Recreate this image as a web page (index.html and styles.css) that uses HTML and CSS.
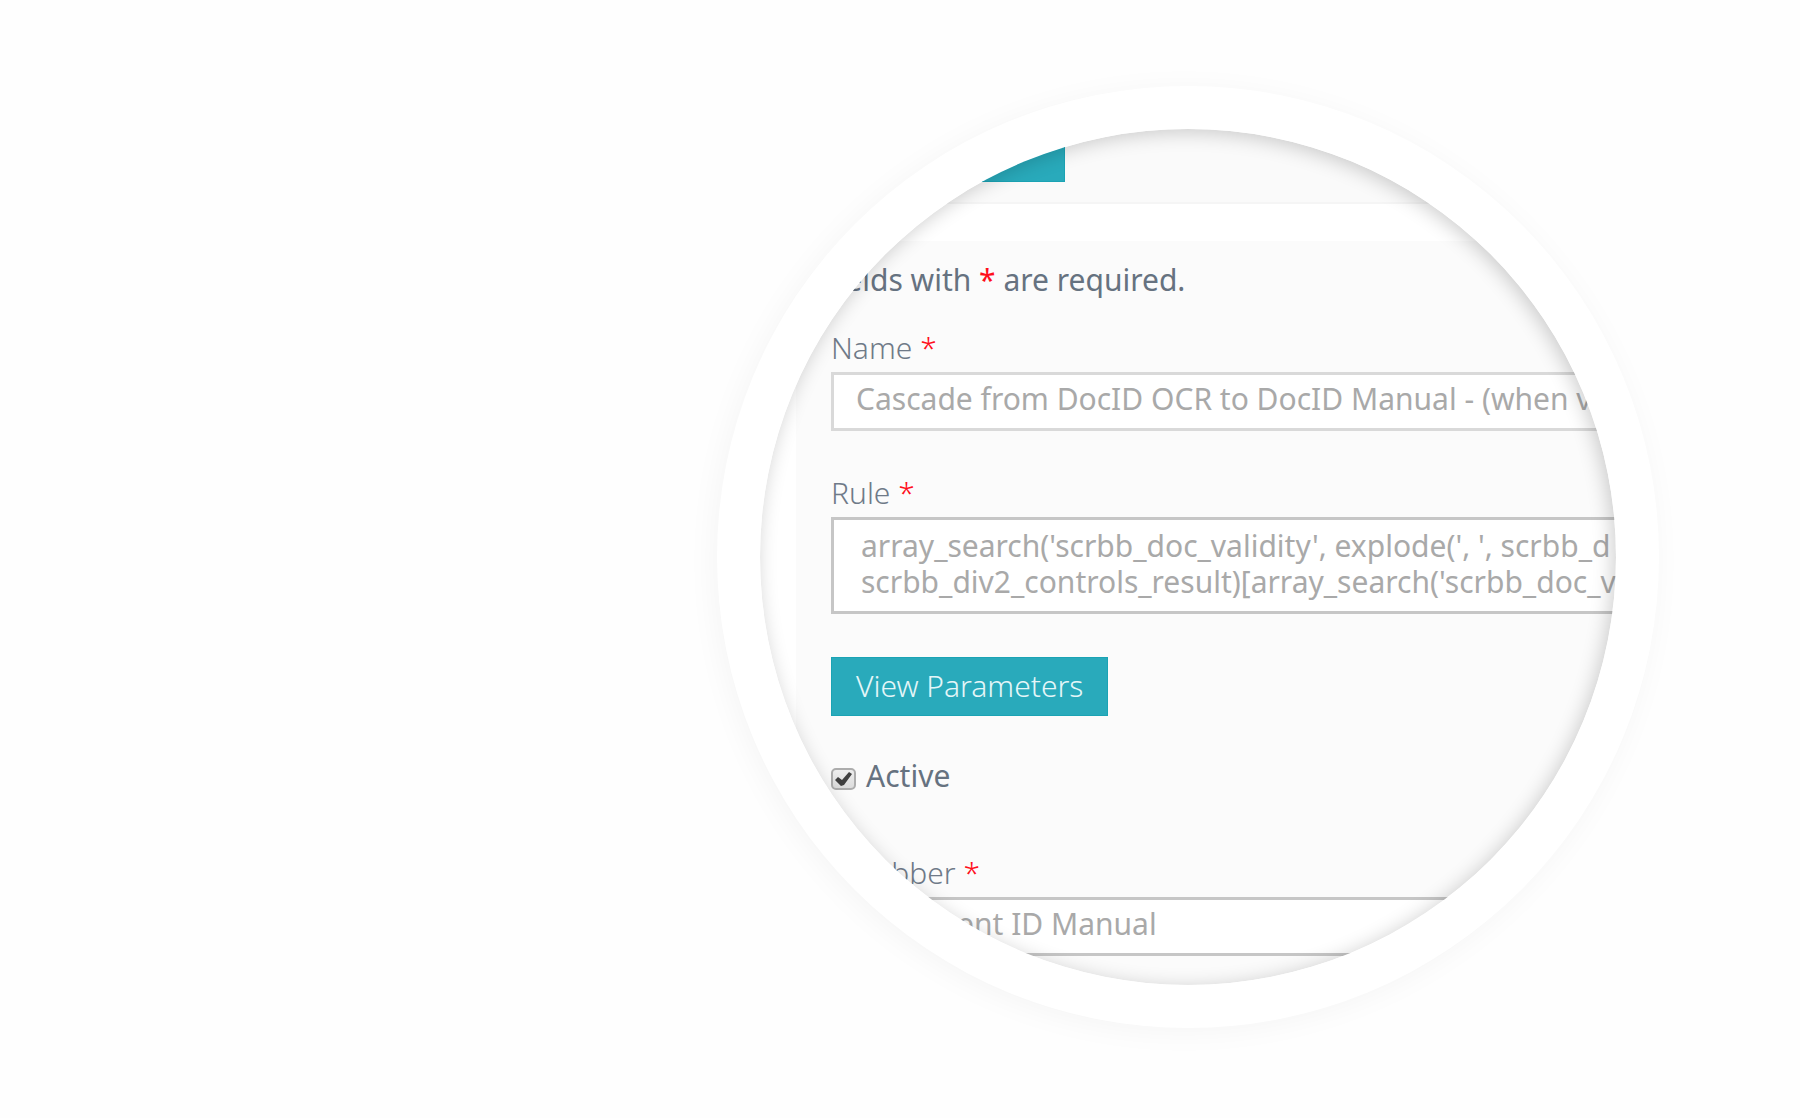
FILE: index.html
```html
<!DOCTYPE html>
<html lang="en">
<head>
<meta charset="utf-8">
<meta name="viewport" content="width=device-width, initial-scale=1">
<title>Edit rule</title>
<link rel="stylesheet" href="styles.css">
</head>
<body>
<main class="stage">
  <div class="lens">
    <div class="view">
      <header class="toolbar"><div class="tab"></div></header>
      <form class="panel">
        <p class="note">Fields with <span class="star">*</span> are required.</p>
        <div class="field">
          <label class="label" for="name">Name <span class="star">*</span></label>
          <input class="control control-soft" id="name" type="text" value="Cascade from DocID OCR to DocID Manual - (when v">
        </div>
        <div class="field">
          <label class="label" for="rule">Rule <span class="star">*</span></label>
          <textarea class="control area" id="rule" wrap="off">array_search('scrbb_doc_validity', explode(', ', scrbb_d
scrbb_div2_controls_result)[array_search('scrbb_doc_v</textarea>
        </div>
        <button class="button" type="button">View Parameters</button>
        <div class="check">
          <input class="box" id="active" type="checkbox" checked>
          <label for="active">Active</label>
        </div>
        <div class="field">
          <label class="label" for="scrubber">Scrubber <span class="star">*</span></label>
          <select class="control" id="scrubber"><option>Document ID Manual</option></select>
        </div>
      </form>
    </div>
  </div>
</main>
</body>
</html>
```
FILE: styles.css
```css
* {
  box-sizing: border-box;
}

body {
  margin: 0;
  background: #fefefe;
  color: #667280;
  font: 30px/38px "Noto Sans", "Open Sans", sans-serif;
}

.stage {
  display: flex;
  align-items: center;
  justify-content: flex-end;
  min-height: 100vh;
  padding: 0 141px 5px 0;
  overflow: hidden;
}

.lens {
  flex: none;
  width: 942px;
  aspect-ratio: 1;
  padding: 43px;
  border-radius: 50%;
  background: #fff;
  box-shadow: -4px 4px 30px rgba(0, 0, 0, 0.04);
}

.view {
  position: relative;
  height: 100%;
  overflow: hidden;
  border-radius: 50%;
  background: #fff;
}

/* Shade cast by the rim onto the page below */
.view::after {
  content: "";
  position: absolute;
  inset: 0;
  border-radius: 50%;
  box-shadow: inset -3px 3px 20px rgba(0, 0, 0, 0.2);
  pointer-events: none;
}

.toolbar {
  height: 75px;
  padding-left: 70px;
  border-bottom: 2px solid #f5f5f5;
  background: #fafafa;
}

.tab {
  width: 235px;
  height: 53px;
  border: 1px solid #1ba3b4;
  background: #29aabb;
}

.panel {
  width: 1000px;
  margin: 37px 0 0 36px;
  padding: 20px 35px 60px;
  background: #fbfbfb;
}

.note {
  margin: 0 -9px 30px;
}

.star {
  color: #ff0f1b;
}

.field {
  display: flex;
  flex-direction: column;
  gap: 5px;
  margin-bottom: 43px;
}

.label {
  color: #6f7a88;
  font-weight: 300;
}

.control {
  width: 100%;
  height: 59px;
  margin: 0;
  padding: 0 22px 5px;
  border: 3px solid #c6c6c6;
  border-radius: 0;
  background: #fff;
  color: #a9a9a9;
  font: inherit;
  appearance: none;
}

.control-soft {
  border-color: #d9d9d9;
}

.area {
  display: block;
  height: 97px;
  padding: 8px 27px;
  line-height: 36px;
  overflow: hidden;
  resize: none;
}

.button {
  display: block;
  height: 59px;
  padding: 0 24px;
  border: 1px solid #1ba3b4;
  background: #29aabb;
  color: #e4f6f8;
  font: inherit;
  font-weight: 300;
}

.check {
  display: flex;
  align-items: center;
  gap: 10px;
  margin: 41px 0 59px;
}

.box {
  width: 25px;
  height: 22px;
  margin: 6px 0 0;
  border: 2px solid #adadad;
  border-radius: 5px;
  appearance: none;
  background:
    url("data:image/svg+xml,%3Csvg xmlns='http://www.w3.org/2000/svg' viewBox='0 0 21 18'%3E%3Cpath d='M2 10 5 7l4 3 7-8 3 2-8 11-3 1z' fill='%23404040'/%3E%3C/svg%3E") center / 100% 100% no-repeat,
    linear-gradient(#eee, #dcdcdc);
}
```
